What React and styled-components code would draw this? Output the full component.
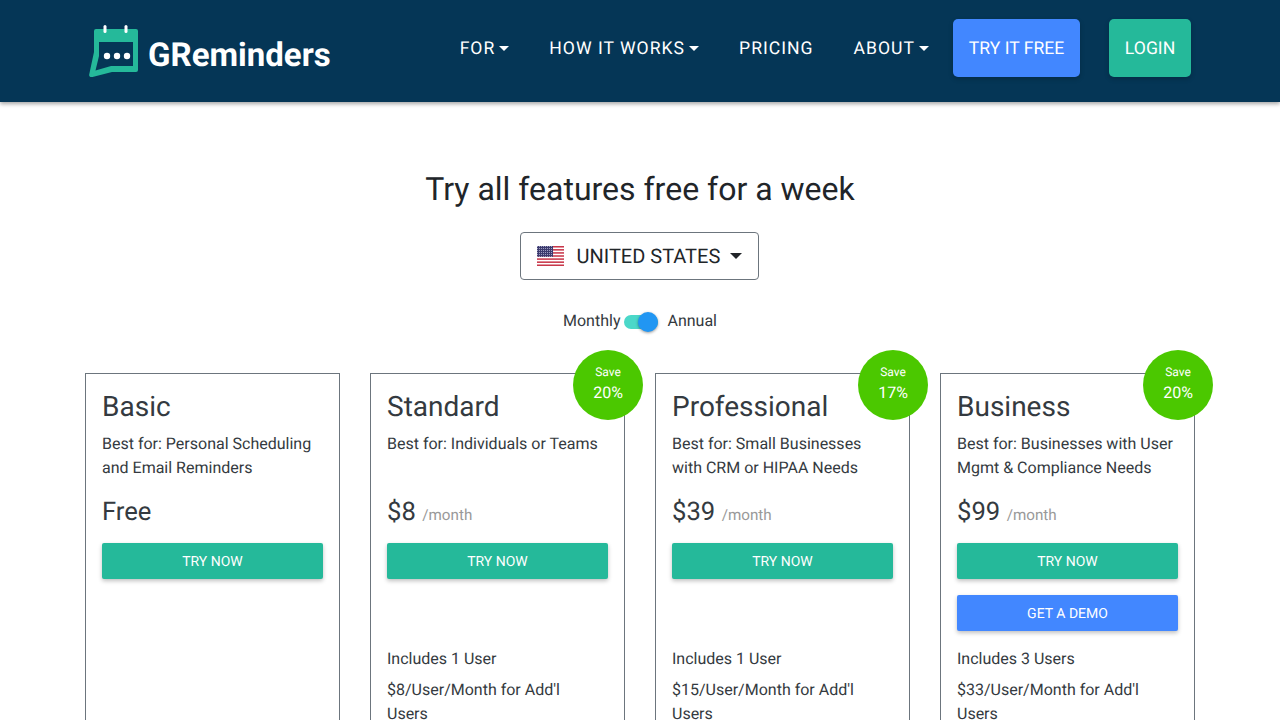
import React from 'react';
import styled, { createGlobalStyle } from 'styled-components';

const GlobalStyle = createGlobalStyle`
  html, body {
    margin: 0;
    padding: 0;
    height: 720px;
    overflow: hidden;
    background: #fff;
    font-family: Roboto, "Liberation Sans", sans-serif;
    color: #212529;
    text-rendering: geometricPrecision;
  }
  * { box-sizing: border-box; }
`;

const Header = styled.header`
  height: 102px;
  background: #053656;
  box-shadow: 0 2px 4px rgba(0, 0, 0, 0.35);
  display: flex;
  align-items: center;
  justify-content: space-between;
  padding: 0 89px 6px 89px;
  position: relative;
`;

const Logo = styled.div`
  display: flex;
  align-items: center;
  gap: 9px;
  color: #fff;
  padding-top: 6px;
`;

const LogoText = styled.span`
  font-size: 33px;
  font-weight: 700;
  margin-top: 9px;
`;

const Nav = styled.nav`
  display: flex;
  align-items: center;
`;

const NavLink = styled.a`
  color: #fff;
  font-size: 17.6px;
  letter-spacing: 1px;
  padding-top: 2px;
  margin-right: ${(props) => props.$space}px;
  display: flex;
  align-items: center;
`;

const Caret = styled.span`
  display: inline-block;
  margin-left: ${(props) => props.$gap || 4}px;
  border-top: ${(props) => props.$size || 5}px solid currentColor;
  border-left: ${(props) => props.$size || 5}px solid transparent;
  border-right: ${(props) => props.$size || 5}px solid transparent;
`;

const NavCaret = styled(Caret)`
  margin-bottom: 2px;
`;

const NavButton = styled.a`
  height: 58px;
  display: flex;
  align-items: center;
  padding: 2px 15.8px 0;
  border-radius: 5px;
  color: #fff;
  font-size: 17.6px;
  background: ${(props) => props.$bg};
  margin-left: ${(props) => props.$space || 0}px;
  box-shadow: 0 2px 5px rgba(0, 0, 0, 0.2);
`;

const Main = styled.main`
  width: 1140px;
  margin: 0 auto;
  padding: 0 15px;
  display: flex;
  flex-direction: column;
  align-items: center;
`;

const Title = styled.h1`
  margin: 67px 0 0;
  font-size: 32px;
  font-weight: 400;
  line-height: 40px;
  color: #212529;
`;

const CountrySelect = styled.div`
  margin: 23px 1px 0 0;
  width: 239px;
  height: 48px;
  border: 1px solid #6c757d;
  border-radius: 4px;
  display: flex;
  align-items: center;
  padding-left: 16px;
  font-size: 20px;
  color: #212529;
`;

const CountryName = styled.span`
  margin-left: 12.5px;
`;

const BillingRow = styled.div`
  margin-top: 29px;
  height: 22px;
  display: flex;
  align-items: center;
  font-size: 16px;
  color: #343a40;
`;

const Toggle = styled.div`
  width: 34px;
  height: 14px;
  border-radius: 7px;
  background: #4bd8c9;
  margin: 4px 9.5px 0 3.5px;
  position: relative;
`;

const Knob = styled.span`
  position: absolute;
  right: 0;
  top: -3px;
  width: 20px;
  height: 20px;
  border-radius: 50%;
  background: #2196f3;
  box-shadow: 0 1px 3px rgba(0, 0, 0, 0.4);
`;

const Plans = styled.section`
  margin-top: 42px;
  width: 100%;
  display: grid;
  grid-template-columns: repeat(4, 255px);
  gap: 30px;
`;

const Card = styled.article`
  position: relative;
  border: 1px solid #6c757d;
  padding: 16px;
  height: 500px;
  color: #343a40;
`;

const SaveBadge = styled.div`
  position: absolute;
  top: -24px;
  right: -19px;
  width: 70px;
  height: 70px;
  padding-bottom: 2px;
  border-radius: 50%;
  background: #4bc800;
  color: #fff;
  display: flex;
  flex-direction: column;
  align-items: center;
  justify-content: center;
`;

const SaveLabel = styled.span`
  font-size: 12px;
  line-height: 18px;
`;

const SavePercent = styled.span`
  font-size: 16px;
  line-height: 24px;
`;

const PlanName = styled.h2`
  margin: 0;
  font-size: 28px;
  font-weight: 400;
  line-height: 34px;
`;

const BestFor = styled.p`
  margin: 8px 0 0;
  font-size: 16px;
  line-height: 24px;
  height: 48px;
`;

const PriceRow = styled.div`
  margin-top: 14px;
  height: 36px;
  display: flex;
  align-items: baseline;
  font-size: 25.6px;
  line-height: 36px;
`;

const PerMonth = styled.span`
  font-size: 15.2px;
  color: #999;
  margin-left: 6.5px;
`;

const PlanButton = styled.a`
  display: flex;
  align-items: center;
  justify-content: center;
  height: 36px;
  padding-top: 2px;
  margin-top: ${(props) => props.$top}px;
  border-radius: 2px;
  background: ${(props) => props.$bg};
  color: #fff;
  font-size: 14px;
  box-shadow: 0 2px 4px rgba(0, 0, 0, 0.25);
`;

const ButtonSlot = styled.div`
  height: 52px;
`;

const Feature = styled.p`
  margin: ${(props) => props.$top}px 0 0;
  padding-right: 10px;
  font-size: 16px;
  line-height: 24px;
`;

const GReminderIcon = () => (
  <svg width="50" height="52" viewBox="0 0 50 52" fill="none">
    <path
      d="M7 4H47a2 2 0 0 1 2 2V45a2 2 0 0 1-2 2H23L3.5 52C1 52.6-.3 51 .3 49L5 27V6a2 2 0 0 1 2-2z"
      fill="#25b99a"
    />
    <path d="M10 17H44V41H22L6.5 45.5 10 31z" fill="#053656" />
    <rect x="14.5" y="0" width="3" height="8" rx="1.5" fill="#fff" />
    <rect x="35.5" y="0" width="3" height="8" rx="1.5" fill="#fff" />
    <circle cx="18" cy="31" r="3.2" fill="#fff" />
    <circle cx="28" cy="31" r="3.2" fill="#fff" />
    <circle cx="38" cy="31" r="3.2" fill="#fff" />
  </svg>
);

const UsFlag = () => (
  <svg width="27" height="20" viewBox="0 0 27 20">
    <defs>
      <pattern id="usStars" width="2" height="2" patternUnits="userSpaceOnUse">
        <rect width="2" height="2" fill="#3c3b6e" />
        <rect width="1" height="1" fill="#9d9cc0" />
      </pattern>
    </defs>
    <rect width="27" height="20" fill="#fff" />
    {[0, 1, 2, 3, 4, 5, 6].map((i) => (
      <rect key={i} y={i * 3.08} width="27" height="1.54" fill="#c8374a" />
    ))}
    <rect width="16" height="10.8" fill="url(#usStars)" />
  </svg>
);

const PLANS = [
  {
    name: 'Basic',
    bestFor: 'Best for: Personal Scheduling and Email Reminders',
    price: 'Free',
  },
  {
    name: 'Standard',
    bestFor: 'Best for: Individuals or Teams',
    price: '$8',
    save: '20%',
    users: 'Includes 1 User',
    extra: "$8/User/Month for Add'l Users",
  },
  {
    name: 'Professional',
    bestFor: 'Best for: Small Businesses with CRM or HIPAA Needs',
    price: '$39',
    save: '17%',
    users: 'Includes 1 User',
    extra: "$15/User/Month for Add'l Users",
  },
  {
    name: 'Business',
    bestFor: 'Best for: Businesses with User Mgmt & Compliance Needs',
    price: '$99',
    save: '20%',
    demo: true,
    users: 'Includes 3 Users',
    extra: "$33/User/Month for Add'l Users",
  },
];

const App = () => (
  <>
    <GlobalStyle />
    <Header>
      <Logo>
        <GReminderIcon />
        <LogoText>GReminders</LogoText>
      </Logo>
      <Nav>
        <NavLink $space={40}>FOR<NavCaret /></NavLink>
        <NavLink $space={40}>HOW IT WORKS<NavCaret /></NavLink>
        <NavLink $space={40}>PRICING</NavLink>
        <NavLink $space={24}>ABOUT<NavCaret /></NavLink>
        <NavButton $bg="#4287ff">TRY IT FREE</NavButton>
        <NavButton $bg="#25b99a" $space={29}>LOGIN</NavButton>
      </Nav>
    </Header>
    <Main>
      <Title>Try all features free for a week</Title>
      <CountrySelect>
        <UsFlag />
        <CountryName>UNITED STATES</CountryName>
        <Caret $gap={10} $size={6} />
      </CountrySelect>
      <BillingRow>
        <span>Monthly</span>
        <Toggle><Knob /></Toggle>
        <span>Annual</span>
      </BillingRow>
      <Plans>
        {PLANS.map((plan) => (
          <Card key={plan.name}>
            {plan.save && (
              <SaveBadge>
                <SaveLabel>Save</SaveLabel>
                <SavePercent>{plan.save}</SavePercent>
              </SaveBadge>
            )}
            <PlanName>{plan.name}</PlanName>
            <BestFor>{plan.bestFor}</BestFor>
            <PriceRow>
              {plan.price}
              {plan.price !== 'Free' && <PerMonth>/month</PerMonth>}
            </PriceRow>
            <PlanButton $bg="#25b99a" $top={13}>TRY NOW</PlanButton>
            {plan.demo
              ? <PlanButton $bg="#4287ff" $top={16}>GET A DEMO</PlanButton>
              : <ButtonSlot />}
            {plan.users && <Feature $top={16}>{plan.users}</Feature>}
            {plan.extra && <Feature $top={7}>{plan.extra}</Feature>}
          </Card>
        ))}
      </Plans>
    </Main>
  </>
);

export default App;
